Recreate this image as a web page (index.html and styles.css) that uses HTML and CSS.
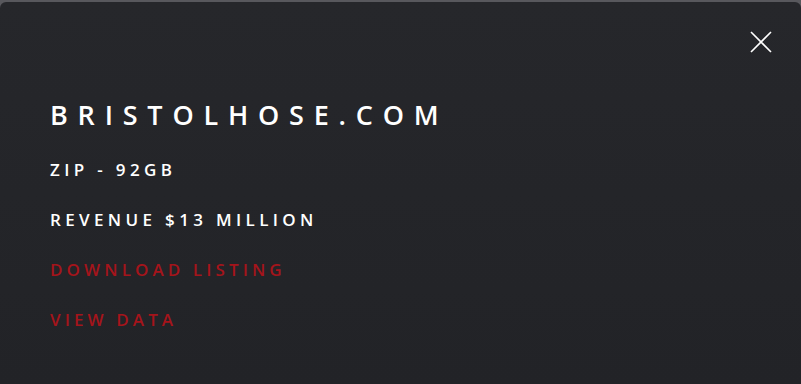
FILE: index.html
```html
<!DOCTYPE html>
<html lang="en">
<head>
  <meta charset="UTF-8" />
  <meta name="viewport" content="width=device-width, initial-scale=1.0"/>
  <title>bristolhose.com</title>
  <link rel="stylesheet" href="styles.css">
</head>
<body>
  <div class="listing-modal">
    <div class="modal-top">
      <button class="close-btn" aria-label="Close">
        <svg width="24" height="24" viewBox="0 0 24 24">
          <path d="M2 2 L22 22 M22 2 L2 22" stroke="#fff" stroke-width="1.6" fill="none"/>
        </svg>
      </button>
    </div>

    <div class="modal-body">
      <h1 class="listing-title">BRISTOLHOSE.COM</h1>
      <p class="listing-meta">ZIP - 92GB</p>
      <p class="listing-meta">REVENUE $13 MILLION</p>
      <a class="listing-link" href="#">DOWNLOAD LISTING</a>
      <a class="listing-link" href="#">VIEW DATA</a>
    </div>
  </div>
</body>
</html>
```

FILE: styles.css
```css
* {
  box-sizing: border-box;
}

body {
  margin: 0;
  background: #58585d;
  font-family: 'Open Sans', 'Liberation Sans', sans-serif;
  overflow: hidden;
}

.listing-modal {
  margin-top: 2px;
  height: 382px;
  border-radius: 6px 6px 0 0;
  background: linear-gradient(180deg, #26272b 0%, #222327 100%);
  display: flex;
  flex-direction: column;
}

.modal-top {
  display: flex;
  justify-content: flex-end;
  padding: 28px 28px 0 0;
}

.close-btn {
  border: none;
  background: none;
  padding: 0;
  width: 24px;
  height: 24px;
  cursor: pointer;
}

.close-btn svg {
  display: block;
}

.modal-body {
  display: flex;
  flex-direction: column;
  padding: 43px 50px 0;
}

.listing-title {
  margin: 0;
  color: #fff;
  font-size: 27px;
  font-weight: 600;
  letter-spacing: 9.8px;
  line-height: 36px;
}

.listing-meta {
  margin: 26px 0 0;
  color: #fff;
  font-size: 17px;
  font-weight: 600;
  letter-spacing: 4.35px;
  line-height: 22px;
}

.listing-meta + .listing-meta {
  margin-top: 28px;
}

.listing-link {
  margin-top: 28px;
  color: #a5141b;
  font-size: 17px;
  font-weight: 600;
  letter-spacing: 4.1px;
  line-height: 22px;
  text-decoration: none;
}
```
